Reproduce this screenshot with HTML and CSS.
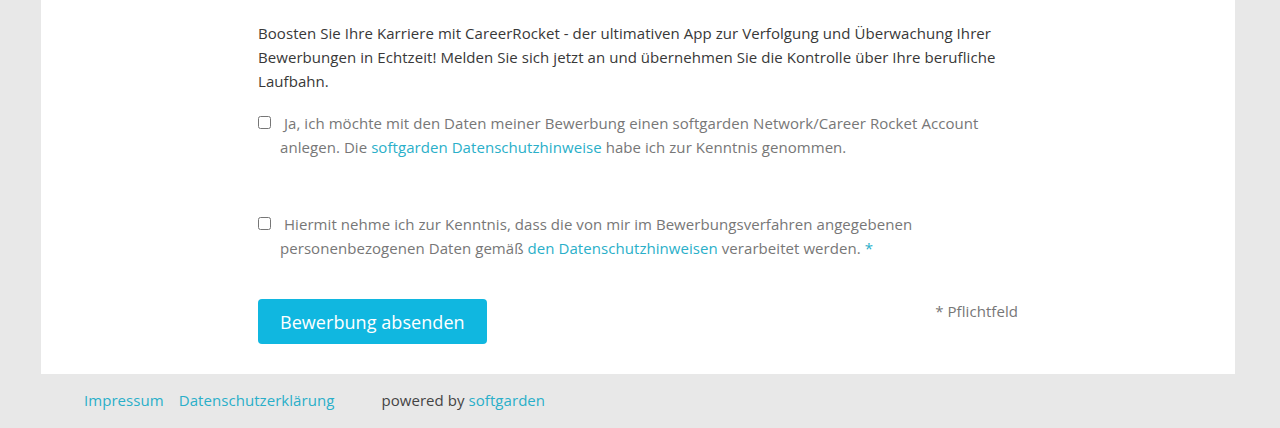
FILE: index.html
```html
<!DOCTYPE html>
<html lang="de">
<head>
  <meta charset="UTF-8">
  <title>Bewerbung</title>
  <link rel="stylesheet" href="styles.css">
</head>
<body>
  <div class="panel">
    <form class="form">
      <p class="intro">Boosten Sie Ihre Karriere mit CareerRocket - der ultimativen App zur Verfolgung und Überwachung Ihrer Bewerbungen in Echtzeit! Melden Sie sich jetzt an und übernehmen Sie die Kontrolle über Ihre berufliche Laufbahn.</p>

      <label class="check first">
        <input type="checkbox">
        &nbsp;Ja, ich möchte mit den Daten meiner Bewerbung einen softgarden Network/Career Rocket Account anlegen. Die <a href="#">softgarden Datenschutzhinweise</a> habe ich zur Kenntnis genommen.
      </label>

      <label class="check second">
        <input type="checkbox">
        &nbsp;Hiermit nehme ich zur Kenntnis, dass die von mir im Bewerbungsverfahren angegebenen personenbezogenen Daten gemäß <a href="#">den Datenschutzhinweisen</a> verarbeitet werden. <span class="req">*</span>
      </label>

      <div class="actions">
        <button type="button" class="submit">Bewerbung absenden</button>
        <span class="note">* Pflichtfeld</span>
      </div>
    </form>
  </div>

  <footer class="footer">
    <a href="#">Impressum</a>
    <a href="#">Datenschutzerklärung</a>
    <span class="powered">powered by <a href="#">softgarden</a></span>
  </footer>
</body>
</html>
```

FILE: styles.css
```css
body {
  margin: 0;
  background: #e8e8e8;
  font-family: "Open Sans", Arial, sans-serif;
  font-size: 15px;
  line-height: 24px;
  letter-spacing: 0.06px;
  color: #383838;
}
a {
  color: #2aafc9;
  text-decoration: none;
}
.panel {
  margin: 0 45px 0 41px;
  background: #fff;
  padding: 21px 0 30px 217px;
}
.form {
  width: 760px;
}
.intro {
  margin: 0 0 18px;
}
.check {
  display: block;
  position: relative;
  padding-left: 22px;
  color: #777;
}
.check input {
  position: absolute;
  left: 0;
  top: 5px;
  width: 13px;
  height: 13px;
  margin: 0;
}
.check.first {
  margin-bottom: 53px;
}
.check.second {
  margin-bottom: 39px;
}
.req {
  color: #2aafc9;
}
.actions {
  display: flex;
  justify-content: space-between;
  align-items: flex-start;
}
.submit {
  font-family: "Open Sans", Arial, sans-serif;
  font-size: 18px;
  letter-spacing: 0.06px;
  color: #fff;
  background: #10b7e0;
  border: none;
  border-radius: 4px;
  height: 45px;
  padding: 0 22px;
  cursor: pointer;
}
.note {
  color: #777;
  line-height: 24px;
}
.footer {
  padding: 14px 0 0 84px;
  height: 39px;
}
.footer a {
  margin-right: 11px;
}
.powered {
  margin-left: 32px;
  color: #444;
}
.powered a {
  margin: 0;
}
```
